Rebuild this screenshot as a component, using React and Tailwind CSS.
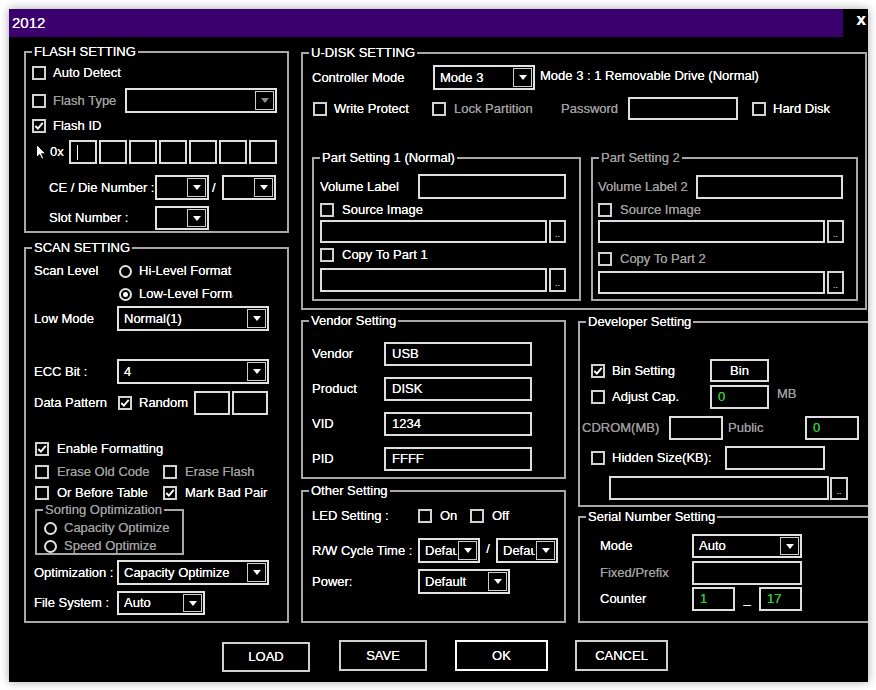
import React from "react";

// small building blocks of the old win32 dialog (black skin)
const Box = ({ checked }) => (
  <span className="w-[14px] h-[14px] shrink-0 border-2 border-[#d2d2d2] bg-black flex items-center justify-center">
    {checked && (
      <svg width="10" height="10" viewBox="0 0 10 10">
        <path d="M1.3 5 L3.9 7.6 L8.7 1.8" stroke="#fff" strokeWidth="1.9" fill="none" />
      </svg>
    )}
  </span>
);

const Check = ({ checked, dim, label, w = "", gap = "pl-[7px]" }) => (
  <div className="flex items-center">
    <Box checked={checked} />
    <span className={`${w} ${gap} whitespace-nowrap ${dim ? "text-[#9e9e9e]" : "text-white"}`}>{label}</span>
  </div>
);

const Radio = ({ checked }) => (
  <span className="w-[13px] h-[13px] shrink-0 rounded-full border-2 border-[#e2e2e2] flex items-center justify-center">
    {checked && <span className="w-[5px] h-[5px] rounded-full bg-white" />}
  </span>
);

const Field = ({ cls, value, green, children }) => (
  <div
    className={`${cls} shrink-0 border-2 border-[#dedede] bg-black flex items-center pl-[6px] whitespace-nowrap overflow-hidden ${
      green ? "text-[#2fcf2f]" : "text-white"
    }`}
  >
    {children}
    {value}
  </div>
);

const Select = ({ cls, value, dim }) => (
  <div className={`${cls} shrink-0 border-2 border-[#e2e2e2] bg-black flex`}>
    <div className="flex-1 min-w-0 overflow-hidden whitespace-nowrap pl-[5px] flex items-center text-white">{value}</div>
    <div className="w-[19px] m-[1px] border border-[#cdcdcd] flex items-center justify-center">
      <svg width="8" height="5" viewBox="0 0 8 5">
        <path d="M0 0H8L4 5Z" fill={dim ? "#8c8c8c" : "#fff"} />
      </svg>
    </div>
  </div>
);

const Dots = ({ cls }) => (
  <div className={`${cls} shrink-0 border-2 border-[#d6d6d6] bg-black flex items-end justify-center pb-[2px] text-[9px] leading-none text-[#b4b4b4]`}>
    ..
  </div>
);

const Group = ({ title, dim, cls, children }) => (
  <div className={`relative shrink-0 border-2 border-[#a8a8a8] ${cls}`}>
    <span
      className={`absolute -top-[9px] left-[6px] px-[2px] bg-black leading-[16px] whitespace-nowrap ${
        dim ? "text-[#9e9e9e]" : "text-white"
      }`}
    >
      {title}
    </span>
    {children}
  </div>
);

const Cursor = () => (
  <svg width="11" height="16" viewBox="0 0 11 16" className="shrink-0">
    <path d="M0.5 0.5 L0.5 13.5 L3.6 10.6 L5.9 15.2 L7.8 14.3 L5.6 9.8 L9.8 9.8 Z" fill="#fff" stroke="#000" strokeWidth="1" />
  </svg>
);

const Button = ({ label, cls }) => (
  <div className={`${cls} shrink-0 border-2 flex items-center justify-center text-white`}>{label}</div>
);

const FlashSetting = () => (
  <Group title="FLASH SETTING" cls="mt-[14px] h-[182px]">
    <div className="flex flex-col pl-[6px]">
      <div className="flex items-center h-[20px] mt-[10px]">
        <Check label="Auto Detect" />
      </div>
      <div className="flex items-center h-[25px] mt-[5px]">
        <Check dim label="Flash Type" w="w-[79px]" />
        <Select cls="w-[152px] h-[25px]" dim value="" />
      </div>
      <div className="flex items-center h-[20px] mt-[3px]">
        <Check checked label="Flash ID" />
      </div>
      <div className="flex items-center h-[24px] mt-[4px]">
        <span className="ml-[4px]">
          <Cursor />
        </span>
        <span className="w-[19px] ml-[3px] text-white">0x</span>
        <div className="flex gap-[2px]">
          <Field cls="w-[28px] h-[24px]">
            <span className="w-[1px] h-[15px] bg-white" />
          </Field>
          {[1, 2, 3, 4, 5, 6].map((i) => (
            <Field key={i} cls="w-[28px] h-[24px]" />
          ))}
        </div>
      </div>
      <div className="flex items-center h-[25px] mt-[11px]">
        <span className="w-[123px] pl-[17px] text-white whitespace-nowrap">CE / Die Number :</span>
        <Select cls="w-[54px] h-[25px]" value="" />
        <span className="w-[13px] pl-[3px] text-white">/</span>
        <Select cls="w-[54px] h-[25px]" value="" />
      </div>
      <div className="flex items-center h-[24px] mt-[6px]">
        <span className="w-[123px] pl-[17px] text-white whitespace-nowrap">Slot Number :</span>
        <Select cls="w-[54px] h-[24px]" value="" />
      </div>
    </div>
  </Group>
);

const ScanSetting = () => (
  <Group title="SCAN SETTING" cls="mt-[14px] h-[376px]">
    <div className="flex flex-col">
      <div className="flex items-center h-[18px] mt-[13px]">
        <span className="w-[93px] pl-[8px] text-white">Scan Level</span>
        <Radio />
        <span className="w-[101px] pl-[7px] overflow-hidden whitespace-nowrap text-white">Hi-Level Format</span>
      </div>
      <div className="flex items-center h-[18px] mt-[5px]">
        <span className="w-[93px]" />
        <Radio checked />
        <span className="w-[101px] pl-[7px] overflow-hidden whitespace-nowrap text-white">Low-Level Format</span>
      </div>
      <div className="flex items-center h-[25px] mt-[3px]">
        <span className="w-[91px] pl-[8px] text-white">Low Mode</span>
        <Select cls="w-[152px] h-[25px]" value="Normal(1)" />
      </div>
      <div className="flex items-center h-[25px] mt-[28px]">
        <span className="w-[91px] pl-[8px] text-white">ECC Bit :</span>
        <Select cls="w-[152px] h-[25px]" value="4" />
      </div>
      <div className="flex items-center h-[24px] mt-[7px]">
        <span className="w-[92px] pl-[8px] text-white whitespace-nowrap">Data Pattern</span>
        <Check checked label="Random" w="w-[62px]" />
        <Field cls="w-[36px] h-[24px]" />
        <Field cls="w-[36px] h-[24px] ml-[2px]" />
      </div>
      <div className="flex items-center h-[18px] mt-[25px] pl-[9px]">
        <Check checked label="Enable Formatting" gap="pl-[8px]" />
      </div>
      <div className="flex items-center h-[18px] mt-[5px] pl-[9px]">
        <Check dim label="Erase Old Code" w="w-[114px]" gap="pl-[8px]" />
        <Check dim label="Erase Flash" gap="pl-[8px]" />
      </div>
      <div className="flex items-center h-[18px] mt-[3px] pl-[9px]">
        <Check label="Or Before Table" w="w-[114px]" gap="pl-[8px]" />
        <Check checked label="Mark Bad Pair" gap="pl-[8px]" />
      </div>
      <Group title="Sorting Optimization" dim cls="mt-[7px] ml-[9px] w-[149px] h-[46px]">
        <div className="flex flex-col pl-[7px]">
          <div className="flex items-center h-[14px] mt-[10px]">
            <Radio />
            <span className="pl-[7px] text-[#9e9e9e] whitespace-nowrap">Capacity Optimize</span>
          </div>
          <div className="flex items-center h-[14px] mt-[4px]">
            <Radio />
            <span className="pl-[7px] text-[#9e9e9e] whitespace-nowrap">Speed Optimize</span>
          </div>
        </div>
      </Group>
      <div className="flex items-center h-[25px] mt-[5px]">
        <span className="w-[91px] pl-[8px] text-white whitespace-nowrap">Optimization :</span>
        <Select cls="w-[152px] h-[25px]" value="Capacity Optimize" />
      </div>
      <div className="flex items-center h-[24px] mt-[6px]">
        <span className="w-[91px] pl-[8px] text-white whitespace-nowrap">File System :</span>
        <Select cls="w-[88px] h-[24px]" value="Auto" />
      </div>
    </div>
  </Group>
);

const UDiskSetting = () => (
  <Group title="U-DISK SETTING" cls="mt-[15px] w-[566px] h-[258px]">
    <div className="flex flex-col">
      <div className="flex items-center h-[25px] mt-[11px] pl-[9px]">
        <span className="w-[121px] text-white">Controller Mode</span>
        <Select cls="w-[102px] h-[25px]" value="Mode 3" />
        <span className="pl-[5px] pb-[3px] text-white whitespace-nowrap">Mode 3 : 1 Removable Drive (Normal)</span>
      </div>
      <div className="flex items-center h-[23px] mt-[7px] pl-[10px]">
        <Check label="Write Protect" w="w-[105px]" />
        <Check dim label="Lock Partition" w="w-[115px]" gap="pl-[8px]" />
        <span className="w-[67px] text-[#9e9e9e]">Password</span>
        <Field cls="w-[110px] h-[23px]" />
        <span className="ml-[14px]">
          <Check label="Hard Disk" />
        </span>
      </div>
      <div className="flex mt-[37px] pl-[9px] gap-[10px]">
        <Group title="Part Setting 1 (Normal)" cls="w-[269px] h-[144px]">
          <div className="flex flex-col pl-[6px]">
            <div className="flex items-center h-[25px] mt-[15px]">
              <span className="w-[98px] text-white">Volume Label</span>
              <Field cls="w-[148px] h-[25px]" />
            </div>
            <div className="flex items-center h-[17px] mt-[2px]">
              <Check label="Source Image" gap="pl-[8px]" />
            </div>
            <div className="flex items-center h-[23px] mt-[2px]">
              <Field cls="w-[227px] h-[23px]" />
              <Dots cls="w-[17px] h-[23px] ml-[2px]" />
            </div>
            <div className="flex items-center h-[17px] mt-[3px]">
              <Check label="Copy To Part 1" gap="pl-[8px]" />
            </div>
            <div className="flex items-center h-[24px] mt-[5px]">
              <Field cls="w-[227px] h-[24px]" />
              <Dots cls="w-[17px] h-[24px] ml-[2px]" />
            </div>
          </div>
        </Group>
        <Group title="Part Setting 2" dim cls="w-[267px] h-[144px]">
          <div className="flex flex-col pl-[5px]">
            <div className="flex items-center h-[24px] mt-[16px]">
              <span className="w-[98px] text-[#9e9e9e] whitespace-nowrap">Volume Label 2</span>
              <Field cls="w-[147px] h-[24px]" />
            </div>
            <div className="flex items-center h-[17px] mt-[2px]">
              <Check dim label="Source Image" gap="pl-[8px]" />
            </div>
            <div className="flex items-center h-[23px] mt-[2px]">
              <Field cls="w-[227px] h-[23px]" />
              <Dots cls="w-[17px] h-[23px] ml-[2px]" />
            </div>
            <div className="flex items-center h-[18px] mt-[7px]">
              <Check dim label="Copy To Part 2" gap="pl-[8px]" />
            </div>
            <div className="flex items-center h-[23px] mt-[3px]">
              <Field cls="w-[227px] h-[23px]" />
              <Dots cls="w-[17px] h-[23px] ml-[2px]" />
            </div>
          </div>
        </Group>
      </div>
    </div>
  </Group>
);

const VendorSetting = () => (
  <Group title="Vendor Setting" cls="mt-[10px] h-[159px]">
    <div className="flex flex-col pl-[9px]">
      {[
        ["Vendor", "USB", "mt-[20px]"],
        ["Product", "DISK", "mt-[11px]"],
        ["VID", "1234", "mt-[11px]"],
        ["PID", "FFFF", "mt-[11px]"],
      ].map(([label, value, mt]) => (
        <div key={label} className={`flex items-center h-[24px] ${mt}`}>
          <span className="w-[72px] text-white">{label}</span>
          <Field cls="w-[148px] h-[24px]" value={value} />
        </div>
      ))}
    </div>
  </Group>
);

const OtherSetting = () => (
  <Group title="Other Setting" cls="mt-[11px] h-[133px]">
    <div className="flex flex-col pl-[9px]">
      <div className="flex items-center h-[18px] mt-[15px]">
        <span className="w-[106px] text-white whitespace-nowrap">LED Setting :</span>
        <Check label="On" w="w-[38px]" gap="pl-[8px]" />
        <Check label="Off" gap="pl-[8px]" />
      </div>
      <div className="flex items-center h-[25px] mt-[13px]">
        <span className="w-[106px] text-white whitespace-nowrap">R/W Cycle Time :</span>
        <Select cls="w-[62px] h-[25px]" value="Default" />
        <span className="w-[16px] text-center pb-[4px] text-white">/</span>
        <Select cls="w-[62px] h-[25px]" value="Default" />
      </div>
      <div className="flex items-center h-[25px] mt-[6px]">
        <span className="w-[106px] text-white">Power:</span>
        <Select cls="w-[92px] h-[25px]" value="Default" />
      </div>
    </div>
  </Group>
);

const DeveloperSetting = () => (
  <Group title="Developer Setting" cls="mt-[11px] h-[186px]">
    <div className="flex flex-col">
      <div className="flex items-center h-[23px] mt-[36px] pl-[11px]">
        <Check checked label="Bin Setting" w="w-[105px]" />
        <Button label="Bin" cls="w-[59px] h-[23px] border-[#dedede]" />
      </div>
      <div className="flex items-center h-[24px] mt-[3px] pl-[11px]">
        <Check label="Adjust Cap." w="w-[105px]" />
        <Field cls="w-[59px] h-[24px]" green value="0" />
        <span className="pl-[8px] mb-[6px] text-[#9e9e9e]">MB</span>
      </div>
      <div className="flex items-center h-[24px] mt-[7px] pl-[2px]">
        <span className="w-[87px] text-[#9e9e9e]">CDROM(MB)</span>
        <Field cls="w-[54px] h-[24px]" />
        <span className="w-[82px] pl-[5px] text-[#9e9e9e]">Public</span>
        <Field cls="w-[54px] h-[24px]" green value="0" />
      </div>
      <div className="flex items-center h-[24px] mt-[6px] pl-[11px]">
        <Check label="Hidden Size(KB):" w="w-[120px]" />
        <Field cls="w-[100px] h-[24px]" />
      </div>
      <div className="flex items-center h-[24px] mt-[6px] pl-[29px]">
        <Field cls="w-[220px] h-[24px]" />
        <Dots cls="w-[18px] h-[23px] ml-[1px]" />
      </div>
    </div>
  </Group>
);

const SerialSetting = () => (
  <Group title="Serial Number Setting" cls="mt-[9px] h-[107px]">
    <div className="flex flex-col pl-[20px]">
      <div className="flex items-center h-[24px] mt-[16px]">
        <span className="w-[92px] text-white">Mode</span>
        <Select cls="w-[110px] h-[24px]" value="Auto" />
      </div>
      <div className="flex items-center h-[24px] mt-[3px]">
        <span className="w-[92px] text-[#9e9e9e]">Fixed/Prefix</span>
        <Field cls="w-[110px] h-[24px]" />
      </div>
      <div className="flex items-center h-[24px] mt-[2px]">
        <span className="w-[92px] text-white">Counter</span>
        <Field cls="w-[43px] h-[24px]" green value="1" />
        <span className="w-[24px] text-center text-white">_</span>
        <Field cls="w-[43px] h-[24px]" green value="17" />
      </div>
    </div>
  </Group>
);

export default function App() {
  return (
    <div className="w-[876px] h-[690px] bg-white pt-[9px] pl-[9px] font-['Liberation_Sans',Arial,sans-serif] text-[13px] leading-[16px] [text-shadow:0_0_0.6px_currentColor]">
      <div className="w-[859px] h-[673px] bg-black flex flex-col overflow-hidden shadow-[0_0_9px_rgba(0,0,0,0.35)]">
        {/* title bar */}
        <div className="h-[28px] flex shrink-0">
          <div className="flex-1 bg-[#3b006e] flex items-center pl-[3px] text-white text-[15px]">2012</div>
          <div className="w-[25px] flex items-start justify-end pr-[2px] pt-[3px] text-white text-[17px] font-bold">x</div>
        </div>

        {/* dialog body */}
        <div className="flex h-[586px] shrink-0">
          <div className="ml-[15px] w-[265px] flex flex-col shrink-0">
            <FlashSetting />
            <ScanSetting />
          </div>
          <div className="ml-[12px] w-[567px] flex flex-col shrink-0">
            <UDiskSetting />
            <div className="flex gap-[12px]">
              <div className="w-[265px] flex flex-col shrink-0">
                <VendorSetting />
                <OtherSetting />
              </div>
              <div className="w-[300px] flex flex-col shrink-0">
                <DeveloperSetting />
                <SerialSetting />
              </div>
            </div>
          </div>
        </div>

        {/* buttons */}
        <div className="flex items-start mt-[17px] pl-[213px]">
          <Button label="LOAD" cls="w-[88px] h-[30px] mt-[2px] border-[#cfcfcf]" />
          <Button label="SAVE" cls="w-[88px] h-[31px] ml-[29px] border-[#cfcfcf]" />
          <Button label="OK" cls="w-[93px] h-[31px] ml-[28px] border-white" />
          <Button label="CANCEL" cls="w-[93px] h-[31px] ml-[27px] border-[#cfcfcf]" />
        </div>
      </div>
    </div>
  );
}
